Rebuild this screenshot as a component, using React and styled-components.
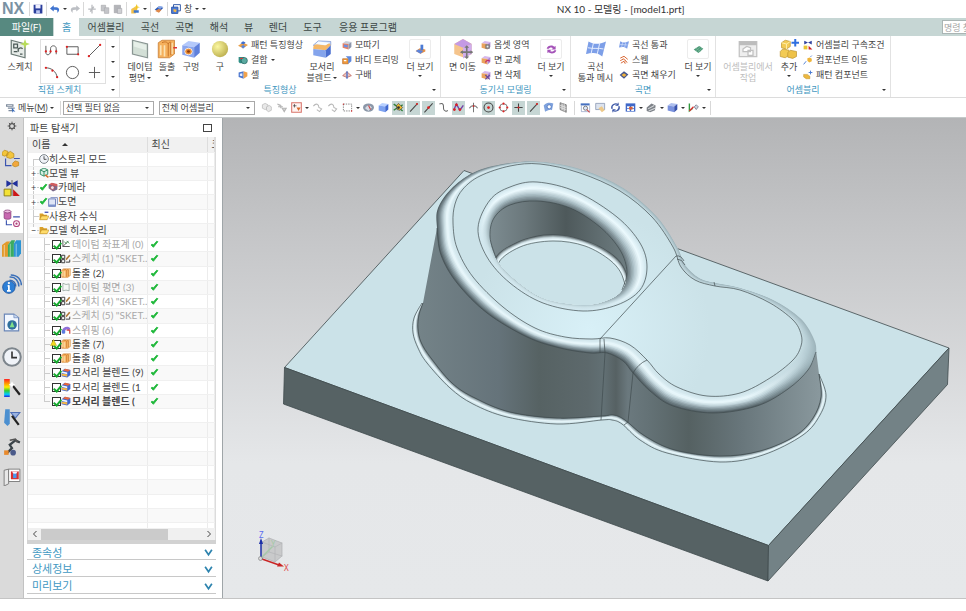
import React, { useState } from "react";
import styled, { createGlobalStyle } from "styled-components";

const GlobalStyle = createGlobalStyle`
  * {
    box-sizing: border-box;
  }
  body {
    margin: 0;
    background: #fff;
    color: #444;
    font-family: Lato, "Noto Sans CJK KR", sans-serif;
    font-size: 10px;
  }
  button, input, select {
    font-family: inherit;
    color: inherit;
    margin: 0;
  }
`;

/* ---------- icons, all on a 16 x 16 grid ---------- */

const Cube = ({ top = "#b8d0ff", left = "#7ea2f0", right = "#3f67cf" }) => (
  <>
    <path d="M1 5 6 1.500 15 3 10.500 6.500Z" fill={top} />
    <path d="M1 5 10.500 6.500V15L1 12.500Z" fill={left} />
    <path d="M10.500 6.500 15 3V11L10.500 15Z" fill={right} />
  </>
);

const GoldCubes = () => (
  <>
    <path d="M2 3 5 1 9 2V6L6 8 2 7Z" fill="#f3cb55" stroke="#c09a38" strokeWidth=".6" />
    <path d="M2 3 6 4 9 2M6 4V8" stroke="#fff0b0" fill="none" strokeWidth=".7" />
    <path d="M1 10 3 8 8 9V13L5 15 1 14Z" fill="#f3cb55" stroke="#c09a38" strokeWidth=".6" />
    <path d="M7 11 9 9 14 10V14L11 15.500 7 14.500Z" fill="#eec248" stroke="#c09a38" strokeWidth=".6" />
  </>
);

const Dot = ({ x, y, r = 1.2, c = "#d22" }) => <circle cx={x} cy={y} r={r} fill={c} />;

const icons = {
  save: (
    <>
      <path d="M1 1H15V15H2L1 14Z" fill="#2b3f9c" />
      <path d="M4 1H12V7H4Z" fill="#eef" />
      <path d="M5 10H11V15H5Z" fill="#b9c4ee" />
    </>
  ),
  undo: <path d="M0 7 6 2V5H10C16 5 16 12 11 14 13 10 12 9 6 9V12Z" fill="#3f74d0" />,
  redo: <path d="M16 7 10 2V5H6C0 5 0 12 5 14 3 10 4 9 10 9V12Z" fill="#bcbfc4" />,
  cut: <path d="M8 1V15M2 8H14M5 12 11 4" stroke="#b9bbbf" strokeWidth="2" fill="none" />,
  copy: (
    <g stroke="#a6a8ac" fill="#c4c5c9">
      <path d="M2 2H9V11H2Z" />
      <path d="M7 6H14V15H7Z" />
    </g>
  ),
  paste: (
    <g stroke="#a0a2a6" fill="#b4b5b9">
      <path d="M2 2H12V14H2Z" />
      <path d="M7 7H14V15H7Z" fill="#d0d1d4" />
    </g>
  ),
  star: (
    <>
      <path d="M2 8 7 5 12 7 9 15H2Z" fill="#f3c04a" />
      <path d="M11 0 12 4 16 5 12 6 11 10 9 6 6 5 9 4Z" fill="#f0c520" />
      <path d="M6 10H14V14H6Z" fill="#3c76cc" />
    </>
  ),
  layers: (
    <>
      <path d="M1 9 7 4 15 6 9 12Z" fill="#2e5bb5" />
      <path d="M2 11 7 8 12 9 8 14Z" fill="#e08a4a" />
      <path d="M5 6 9 3 14 4 10 8Z" fill="#84a6e8" />
    </>
  ),
  windows: (
    <>
      <path d="M4 1H15V11H4Z" fill="#fff" stroke="#2d55a8" strokeWidth="1.500" />
      <path d="M1 5H11V15H1Z" fill="#4c7cd8" stroke="#2d55a8" strokeWidth="1.500" />
      <path d="M4 8 9 9 8 13 4 12Z" fill="#f5b840" />
    </>
  ),
  sketch: (
    <>
      <path d="M1 1 12 4V15L1 12Z" fill="#e6ebe8" stroke="#6b7a76" />
      <path d="M3 4H6V7H3ZM7 10C5 8 9 6 10 8M3 10H6M8 12H10" fill="none" stroke="#4b5a57" />
      <path d="M12 0 13 3 16 4 13 5 12 8 11 5 8 4 11 3Z" fill="#b8dc5a" />
    </>
  ),
  profile: (
    <>
      <path d="M2 3V10C2 14 7 13 7 9V6C7 2 13 2 13 6V12" fill="none" stroke="#555" />
      <Dot x={2} y={9} /><Dot x={7} y={9} /><Dot x={13} y={9} />
    </>
  ),
  rect: (
    <>
      <path d="M2 4H14V12H2Z" fill="none" stroke="#555" />
      <Dot x={2} y={4} /><Dot x={14} y={12} />
    </>
  ),
  line: (
    <>
      <path d="M2 14 14 2" stroke="#555" />
      <Dot x={2} y={14} /><Dot x={14} y={2} />
    </>
  ),
  arc: (
    <>
      <path d="M2 3C8 3 13 7 14 13" fill="none" stroke="#555" />
      <Dot x={2} y={3} /><Dot x={9} y={6} /><Dot x={14} y={13} />
    </>
  ),
  circle: <circle cx="8" cy="8" r="6.500" fill="none" stroke="#555" />,
  plus: <path d="M8 2V14M2 8H14" stroke="#555" />,
  datum: (
    <>
      <path d="M2 1 14 4V15L2 12Z" fill="#d3dfd6" stroke="#8a9693" />
      <path d="M3 2 13 5V9L3 6Z" fill="#e6efe8" />
    </>
  ),
  extrude: (
    <>
      <path d="M1 3 4 1H15V12L11 15H1Z" fill="#f5b05c" stroke="#c47a30" strokeWidth=".6" />
      <path d="M3 5V13M6 5V14M13 2V12" stroke="#fbe2b4" strokeWidth="1.500" />
      <path d="M4 3C6 2 8 2 9 4V14M9 4C10 2 12 2 12 3V13" fill="none" stroke="#c8752a" />
    </>
  ),
  extrudeRed: (
    <>
      <path d="M1 3 4 1H14V12L10 15H1Z" fill="#f5b05c" stroke="#c47a30" strokeWidth=".6" />
      <path d="M3 5V13M6 5V14M12 3V12" stroke="#fbe2b4" strokeWidth="1.300" />
      <path d="M4 3C6 2 8 2 9 4V14M9 4C10 2 11 2 11 3V13" fill="none" stroke="#c8752a" strokeWidth=".8" />
      <path d="M13 7H16" stroke="#d33" strokeWidth="1.200" />
    </>
  ),
  hole: (
    <>
      <Cube top="#b4c9fb" left="#8ba6ee" right="#5f80dc" />
      <ellipse cx="6" cy="10" rx="3" ry="2.600" fill="#e98a2e" stroke="#fff" strokeWidth=".6" />
      <ellipse cx="6" cy="10" rx="1.200" ry="1" fill="#8c3c12" />
    </>
  ),
  sphere: <circle cx="8" cy="8" r="6.500" fill="url(#gold)" />,
  pattern: (
    <>
      <path d="M0 9 8 4 16 8 8 13Z" fill="#e9a04a" />
      <path d="M4 5 8 2 12 4 9 7Z" fill="#3f6ed0" />
      <path d="M5 10 8 8 12 10 8 14Z" fill="#5a85da" />
    </>
  ),
  unite: (
    <>
      <path d="M1 3H10V13H3L1 11Z" fill="#2e8f86" />
      <circle cx="10" cy="9" r="5" fill="#5aa9a0" stroke="#1c5c58" />
      <path d="M3 6 8 5" stroke="#e33" strokeWidth="1.500" />
    </>
  ),
  shell: (
    <>
      <path d="M1 4 9 2V14L1 11Z" fill="#4a76cf" />
      <path d="M9 2 15 4V10L9 14Z" fill="#f0a24c" />
      <path d="M3 6 7 5V10L3 9Z" fill="#e9eefc" />
    </>
  ),
  blend: (
    <>
      <path d="M1 5 5 1.500 15 2 15 5 10 7Z" fill="#cfe0ff" stroke="#6a86c8" strokeWidth=".5" />
      <path d="M1 7C1 3 5 4 10 5C14 3 14 3 15 5L11 9 1 8Z" fill="#f5b868" />
      <path d="M5 2 14 3 11 5 3 4Z" fill="#f7fbff" />
      <path d="M1 8 11 9V15L1 13Z" fill="#84a4ec" />
      <path d="M11 9 15 5V12L11 15Z" fill="#4a6fd0" />
    </>
  ),
  treeBlend: (
    <>
      <path d="M1 5 6 1 15 3V11L10 15 1 13Z" fill="#3f67cf" />
      <path d="M1 5 10 7V10L1 8Z" fill="#f0f4ff" />
      <path d="M3 4 7 1 15 3 11 6Z" fill="#e8673c" />
      <path d="M1 9 10 10V14L1 12Z" fill="#f3b64a" />
    </>
  ),
  chamfer: (
    <>
      <Cube top="#c9cfda" left="#e9805e" right="#8d97ad" />
      <path d="M3 7 9 8V12L3 11Z" fill="#6a90e6" />
    </>
  ),
  trim: (
    <>
      <path d="M1 6H10V14H1Z" fill="#f09a3c" stroke="#b5641d" />
      <path d="M6 2H15V10L10 14V6Z" fill="#5e88dc" />
      <path d="M3 9H7" stroke="#fff" strokeWidth="2" />
    </>
  ),
  draft: (
    <>
      <path d="M1 9 8 3 15 9 8 12Z" fill="#e7c3bf" stroke="#b3473c" />
      <path d="M8 2V14" stroke="#3d67c8" strokeWidth="2" />
    </>
  ),
  moreBody: (
    <>
      <path d="M1 10 7 6 15 8V11L8 14Z" fill="#e79147" />
      <path d="M8 1H12V9H8Z" fill="#4b7bd4" />
      <path d="M1 10 5 8 12 10 8 14Z" fill="#5c84dc" />
    </>
  ),
  moveFace: (
    <>
      <path d="M1 4 8 0 15 4V12L9 15 1 12Z" fill="#f5c48c" />
      <path d="M1 4 8 0 15 4 8 7Z" fill="#c49ae4" />
      <path d="M8 7 15 4V12L8 15.500Z" fill="#d0aeee" />
      <path d="M11 6V15M6.500 10.500H15.500" stroke="#777" strokeWidth="1.300" />
      <path d="M11 5 9 7H13ZM11 16 9 14H13ZM5.500 10.500 8 9V12ZM16 10.500 14 9V12Z" fill="#777" />
    </>
  ),
  offset: (
    <>
      <Cube top="#d7b7ec" left="#eba35c" right="#b08ad8" />
      <path d="M7 7H14V14H7Z" fill="#777" />
      <path d="M9 9H12V12H9Z" fill="#eee" />
    </>
  ),
  replace: (
    <>
      <Cube top="#d7b7ec" left="#eba35c" right="#b08ad8" />
      <path d="M7 12C9 8 12 8 14 10" stroke="#c02f6b" strokeWidth="2" fill="none" />
    </>
  ),
  remove: (
    <>
      <Cube top="#d7b7ec" left="#eba35c" right="#b08ad8" />
      <path d="M7 8 14 15M14 8 7 15" stroke="#6a4a9a" strokeWidth="2" />
    </>
  ),
  moreSync: (
    <g fill="#a452b8">
      <path d="M1 7C2 2 9 1 12 4L14 3V8H8L10 6C8 4 5 5 4 7Z" />
      <path d="M15 9C14 14 7 15 4 12L2 13V8.500H8L6 10C8 12 11 11 12 9Z" />
    </g>
  ),
  mesh: (
    <>
      <path d="M2 2C7 5 11 4 16 2L13 14C9 10 4 11 0 12Z" fill="#7d9fe8" />
      <path d="M1.500 7C6 8 10 7 14 8M6 3 4 12M11 3 9 12" stroke="#e5edff" fill="none" strokeWidth=".8" />
    </>
  ),
  swept: (
    <g fill="none" stroke="#d9622e" strokeWidth="1.500">
      <path d="M2 5 8 2 14 7M2 9 8 6 13 12M3 13 8 10 10 14" />
      <path d="M5 3 12 13" stroke="#eab79d" />
    </g>
  ),
  fillSurf: (
    <>
      <path d="M1 8 8 2 15 7 8 14Z" fill="#44568f" />
      <path d="M4 8 8 5 12 8 8 11Z" fill="#f0b23c" />
    </>
  ),
  moreSurf: (
    <>
      <path d="M1 8 9 3 15 7 8 13Z" fill="#4e9a78" />
      <path d="M4 10 11 4M7 12 13 6M4 6 11 11" stroke="#85c0a4" strokeWidth=".8" />
    </>
  ),
  context: (
    <>
      <path d="M1 2H15V14H1Z" fill="#eee" stroke="#c2c2c2" />
      <path d="M1 2H15V5H1Z" fill="#bdbdbd" />
      <path d="M4 8 7 6 10 7V10H4ZM8 9H12V13H8Z" fill="#fff" stroke="#c0c0c0" />
    </>
  ),
  add: (
    <>
      <GoldCubes />
      <path d="M13 0V6M10 3H16" stroke="#2f6fe0" strokeWidth="1.600" />
    </>
  ),
  constraint: (
    <>
      <path d="M2 1 8 4 14 1V7L8 4 2 7Z" fill="#2d3f9c" />
      <path d="M1 9H7V15H1Z" fill="#e9c432" />
      <path d="M9 9 15 15H9Z" fill="#cc2222" />
    </>
  ),
  moveComp: (
    <>
      <path d="M7 5 11 4 14 6V10L10 12 7 9Z" fill="#eeb43a" />
      <path d="M1 15 5 10M12 3 14 1" stroke="#4a7bd2" strokeWidth="1.500" />
    </>
  ),
  patComp: (
    <>
      <path d="M1 7H7L11 10V14H5L1 11Z" fill="#edb840" stroke="#b88a1c" strokeWidth=".7" />
      <path d="M12 1V7M9 4H15" stroke="#4a7bd2" strokeWidth="1.500" />
    </>
  ),
  menu: (
    <>
      <path d="M0 2H12V6H0ZM3 7H14V9H3ZM4 11H11V13H4Z" fill="#7d8a9c" />
      <path d="M2 4H10" stroke="#fff" />
      <path d="M9 7 15 14 11 13 10 16Z" fill="#3b6cb8" />
    </>
  ),
  ghost: (
    <g fill="#e8e8e8" stroke="#b5b5b5">
      <path d="M2 4 6 2 10 4V9L6 11 2 9Z" />
      <path d="M8 7 12 5 15 7V12L11 14 8 12Z" />
    </g>
  ),
  ghostArrow: <path d="M2 3 7 5V9M9 9H15L12 14ZM3 7H10" stroke="#b5b5b5" fill="#d5d5d5" strokeWidth="1.500" />,
  filter: (
    <>
      <path d="M1 1H15V15H1Z" fill="#fff4f2" stroke="#d8736a" strokeWidth="1.500" />
      <path d="M5 3V8M3 5.500H8" stroke="#333" />
      <path d="M8 8H14L11 13Z" fill="#d86a2c" />
    </>
  ),
  ghostHand: <path d="M2 6C6 1 10 3 10 8L14 10 11 14 7 11" stroke="#b8b8b8" fill="none" strokeWidth="1.500" />,
  marquee: (
    <>
      <path d="M2 3H14V13H2Z" fill="none" stroke="#555" strokeDasharray="2 1.500" />
      <Dot x={2} y={3} r={1} /><Dot x={14} y={13} r={1} />
    </>
  ),
  clip: (
    <>
      <ellipse cx="8" cy="8" rx="8" ry="6" fill="#8b97a8" />
      <path d="M3 9C6 4 10 4 13 8L8 13Z" fill="#d6dbe4" />
      <path d="M8 5 11 11" stroke="#c44" strokeWidth="1.500" />
    </>
  ),
  box: <Cube />,
  snap: (
    <>
      <path d="M1 3 7 7M1 12 7 8M9 8 14 4M9 9 14 13" stroke="#2f7f3a" strokeWidth="2" />
      <path d="M5 5 8 2 11 5 14 8 10 12 6 11Z" fill="#e9b830" stroke="#444" />
      <Dot x={8} y={8} r={2} c="#333" />
    </>
  ),
  snapLine: (
    <>
      <path d="M3 14 14 2" stroke="#444" strokeWidth="1.500" />
      <Dot x={13} y={3} r={1.500} />
    </>
  ),
  snapMid: (
    <>
      <path d="M2 15 14 2" stroke="#444" strokeWidth="1.500" />
      <Dot x={8} y={8} r={2} />
    </>
  ),
  curve: <path d="M2 3C9 0 8 7 8 9 8 14 13 14 14 12" fill="none" stroke="#666" strokeWidth="1.500" />,
  poly: (
    <>
      <path d="M1 12 5 3 10 12 15 5" fill="none" stroke="#7242a8" strokeWidth="2" />
      <Dot x={2} y={11} r={2} /><Dot x={10} y={11} r={2} /><Dot x={5} y={4} r={2} />
    </>
  ),
  cross: (
    <>
      <path d="M8 1V15M2 9C5 4 11 4 14 9" fill="none" stroke="#777" strokeWidth="1.500" />
      <Dot x={8} y={6} />
    </>
  ),
  center: (
    <>
      <circle cx="8" cy="8" r="6.500" fill="none" stroke="#444" strokeWidth="1.500" />
      <Dot x={8} y={8} r={2} />
    </>
  ),
  quad: (
    <>
      <circle cx="8" cy="8" r="5.500" fill="none" stroke="#666" strokeWidth="1.200" />
      <Dot x={8} y={2.500} r={1.600} /><Dot x={8} y={13.500} r={1.600} /><Dot x={2.500} y={8} r={1.600} /><Dot x={13.500} y={8} r={1.600} />
    </>
  ),
  plusDark: (
    <>
      <path d="M8 2V14M2 8H14" stroke="#444" strokeWidth="1.500" />
      <Dot x={8} y={8} r={1.500} />
    </>
  ),
  face: (
    <>
      <path d="M1 5C6 0 11 1 15 2L13 12C9 10 7 13 3 14Z" fill="#7fa2dd" />
      <circle cx="9" cy="7" r="3" fill="#fff" stroke="#3d67b8" />
    </>
  ),
  grid: (
    <>
      <path d="M3 1 12 4V15L3 11Z" fill="#aaa" stroke="#666" />
      <path d="M6 2V12M9 3V14M3 5 12 8M3 8 12 11" stroke="#eee" />
    </>
  ),
  fit: (
    <>
      <path d="M1 2H14V5H1Z" fill="#4670c0" />
      <path d="M2 5V14H14V5" fill="none" stroke="#8a9cc0" />
      <circle cx="8" cy="9" r="3" fill="#dfe9fb" stroke="#555" />
      <path d="M10 11 14 15" stroke="#c44" strokeWidth="1.500" />
    </>
  ),
  note: (
    <>
      <path d="M1 2H14V11H1Z" fill="#dce3ee" stroke="#7c8aa8" />
      <path d="M5 9 10 6 14 12 10 15Z" fill="#edc98a" />
    </>
  ),
  rotate: (
    <g fill="none" stroke="#3f5aa8" strokeWidth="2">
      <path d="M3 10C1 4 8 1 12 4M13 6C15 12 8 15 4 12" />
      <path d="M12 1V5H8M4 15V11H8" strokeWidth="1.200" />
    </g>
  ),
  layout: (
    <>
      <path d="M1 2H15V14H1Z" fill="#3f68c8" />
      <path d="M3 6H7V9H3ZM9 6H13V9H9ZM3 10H7V13H3ZM9 10H13V13H9Z" fill="#fff" />
      <path d="M6 7H11V11H6Z" fill="#d9603a" />
    </>
  ),
  shade: (
    <>
      <path d="M1 8 8 2 14 5 13 12 6 15 1 13Z" fill="#7d8288" />
      <path d="M3 10 12 5M4 13 13 9" stroke="#d5d8db" strokeWidth="1.500" />
    </>
  ),
  cubeBlue: <Cube top="#aebfee" left="#7a92de" right="#3752ac" />,
  csys: (
    <>
      <path d="M2 2V13L7 9" stroke="#2e9a3c" strokeWidth="2" fill="none" />
      <path d="M2 13 8 7" stroke="#d33" strokeWidth="2" />
      <path d="M9 7 12 4 15 7 12 11Z" fill="#ccd3df" stroke="#667" />
    </>
  ),
  gear: (
    <>
      <circle cx="8" cy="8" r="4" fill="none" stroke="#555" strokeWidth="2" />
      <path d="M8 1V4M8 12V15M1 8H4M12 8H15M3 3 5 5M11 11 13 13M13 3 11 5M3 13 5 11" stroke="#555" strokeWidth="1.500" />
    </>
  ),
  asmNav: (
    <>
      <path d="M0 3 2 1 5 2V5L2 6 0 5ZM4 4 7 2 10 4V7L7 8 4 7Z" fill="#f3c53c" stroke="#b88a1c" strokeWidth=".6" />
      <path d="M3 8V14H8M10 8H15" stroke="#3c55b0" fill="none" />
      <path d="M9 12 11 10 14 11V14L11 15 9 14Z" fill="#f3a73c" stroke="#b88a1c" strokeWidth=".6" />
    </>
  ),
  consNav: (
    <>
      <path d="M3 1 8 4 13 1V7L8 4 3 7Z" fill="#20309c" />
      <path d="M8 1V15" stroke="#555" strokeWidth=".8" />
      <path d="M1 9H7V15H1Z" fill="#f4e235" stroke="#8a7a10" strokeWidth=".8" />
      <path d="M9 9 15 15H9Z" fill="#cc1818" />
    </>
  ),
  partNav: (
    <>
      <path d="M1 2V8C1 9.500 7 9.500 7 8V2" fill="#c868b0" stroke="#7c2f6c" strokeWidth=".6" />
      <ellipse cx="4" cy="2.200" rx="3" ry="1.300" fill="#efbfe2" stroke="#7c2f6c" strokeWidth=".6" />
      <path d="M3 10V14H8M9 7H15" stroke="#3c55b0" fill="none" />
      <circle cx="12" cy="13" r="2.600" fill="#fff" stroke="#b0407c" strokeWidth=".9" />
      <Dot x={12} y={13} r={1} c="#b0407c" />
    </>
  ),
  books: (
    <>
      <path d="M0 5 4 2H7L5 5V15H0Z" fill="#e39a2a" />
      <path d="M5 5 8 1H11L10 4V15H5Z" fill="#3bac60" />
      <path d="M10 4 12 1H16V12L14 15H10Z" fill="#2b94d4" />
      <path d="M2 5V15M7 4V15M12 4V15" stroke="#fff" strokeOpacity=".4" />
    </>
  ),
  info: (
    <>
      <path d="M6 5C9 5 11 7 11 10M6 2.500C11 2 13.500 6 13.500 10M7 .700C13 .700 15.500 5 15.500 9" fill="none" stroke="#3a6fb8" strokeWidth="1.200" />
      <circle cx="5.500" cy="10.500" r="5" fill="#2d7fd6" stroke="#1b4d96" strokeWidth=".6" />
      <path d="M5.500 9V13.500M4.500 9.500H5.500M4 13.500H7" stroke="#fff" strokeWidth="1.400" />
      <Dot x={5.500} y={7.200} r={.9} c="#fff" />
    </>
  ),
  web: (
    <>
      <path d="M2 1H10L14 4V15H2Z" fill="#f2f7ff" stroke="#6a86b8" />
      <path d="M10 1V4H14" fill="#c9d9f2" stroke="#6a86b8" strokeWidth=".6" />
      <circle cx="8.500" cy="10" r="4" fill="#2f6f9c" />
      <path d="M6.500 12 8.500 7 10.500 12Z" fill="#7fe08a" />
    </>
  ),
  clock: (
    <>
      <circle cx="8" cy="8" r="7" fill="#f0f3f8" stroke="#7d858c" strokeWidth="1.600" />
      <path d="M8 3.500V8.500H12" stroke="#333" strokeWidth="1.300" fill="none" />
    </>
  ),
  rainbow: (
    <>
      <path d="M1 0H6V16H1Z" fill="url(#spectrum)" />
      <path d="M8 5 15 14" stroke="#222" strokeWidth="2" />
      <path d="M8 2 9 4 11 5 9 6 8 8 7 6 5 5 7 4Z" fill="#fff" />
    </>
  ),
  wand: (
    <>
      <path d="M2 1H6V14L4 16 1 13Z" fill="#4b8fd0" />
      <path d="M7 4H15L11 9Z" fill="#9bb3e0" stroke="#5070b8" />
      <path d="M8 7 14 15" stroke="#222" strokeWidth="2" />
    </>
  ),
  robot: (
    <>
      <path d="M4 13 8 9 6 6 11 2 15 4" fill="none" stroke="#3b444a" strokeWidth="2" />
      <path d="M6 2 11 1 13 4" fill="none" stroke="#555" strokeWidth="1.500" />
      <path d="M1 11H5V15H1Z" fill="#e88a2c" />
      <circle cx="9" cy="13" r="2.500" fill="#4a5a8a" />
    </>
  ),
  door: (
    <>
      <path d="M1 2 5 1V14L1 16Z" fill="#e8e8e8" stroke="#777" strokeWidth=".8" />
      <path d="M5 1H15V12H5Z" fill="#fff" stroke="#777" strokeWidth=".8" />
      <path d="M7 3H14V10H7Z" fill="#d93030" />
      <path d="M8 3 10.500 7 13 3Z" fill="#f4f4ff" />
      <path d="M9 5H12V9H9Z" fill="#4a9af0" />
    </>
  ),
  views: (
    <>
      <path d="M2 3 8 0 14 3V10L8 13 2 10Z" fill="#d8eee2" stroke="#2e8a62" strokeWidth="1.500" />
      <path d="M2 3 8 6 14 3M8 6V13" stroke="#2e8a62" fill="none" strokeWidth="1.500" />
      <path d="M10 11 15 15" stroke="#d66a2c" strokeWidth="2.500" />
    </>
  ),
  camera: (
    <>
      <path d="M1 4 9 2 15 6V12L8 15 1 10Z" fill="#7a6a8a" />
      <path d="M1 4 6 1 15 3V7Z" fill="#d25c5c" />
      <circle cx="7" cy="9" r="3" fill="#e8e2ee" stroke="#b33" />
    </>
  ),
  drawing: (
    <>
      <path d="M4 1H15V12" fill="none" stroke="#5a6eb0" strokeWidth="1.200" />
      <path d="M1 3H12V15H1Z" fill="#dfe5f6" stroke="#5a6eb0" strokeWidth="1.300" />
      <path d="M1 12H12V15H1Z" fill="#7c92cc" />
    </>
  ),
  folder: (
    <>
      <path d="M1 3H6L8 5H13V14H1Z" fill="#d9a02a" />
      <path d="M4 8H16L13 14H1Z" fill="#ffdc6a" stroke="#a87818" strokeWidth=".7" />
    </>
  ),
  folderTag: (
    <>
      <path d="M1 4H6L8 6H13V14H1Z" fill="#d9a02a" />
      <path d="M4 8H16L13 14H1Z" fill="#ffdc6a" stroke="#a87818" strokeWidth=".7" />
      <path d="M9 2H15" stroke="#3a4ab0" strokeWidth="2" />
    </>
  ),
  treeCsys: (
    <>
      <path d="M3 1V12H14M3 12 12 3" stroke="#555" fill="none" strokeWidth="1.500" />
      <path d="M5 4 9 8M9 3 13 7" stroke="#3c9c50" strokeWidth="1.500" />
    </>
  ),
  treeSketch: (
    <>
      <path d="M1 2H6V7H1ZM1 9H6V14H1ZM8 13H14V9" stroke="#333" fill="none" strokeWidth="1.500" />
      <path d="M8 9 14 2" stroke="#b07a3a" strokeWidth="2.500" />
    </>
  ),
  treeDatum: <path d="M3 2 8 4 13 3V14L8 13 3 14Z" fill="#f5f8f6" stroke="#7d9088" />,
  treeSwept: (
    <>
      <path d="M1 10C2 3 12 0 15 6L12 9C9 5 6 8 6 12Z" fill="#8f70d8" />
      <circle cx="4" cy="11" r="3" fill="#5a7be0" />
      <path d="M9 8H14V14" stroke="#d34a4a" strokeWidth="2" fill="none" />
    </>
  ),
  tick: <path d="M2 9 6 13 14 3 12 2 6 9 4 7Z" fill="#1fb83a" stroke="#1fb83a" strokeWidth="1.500" />,
  warn: <path d="M1 15 8 1 15 15Z" fill="#f0d820" stroke="#a89a18" />,
};

const Svg = styled.svg`
  display: block;
  flex: none;
  width: ${(p) => p.$size}px;
  height: ${(p) => p.$size}px;
`;

const Icon = ({ name, size = 10 }) => (
  <Svg viewBox="0 0 16 16" $size={size} aria-hidden="true">
    {icons[name]}
  </Svg>
);

/* ---------- frame ---------- */

const Page = styled.div`
  display: flex;
  flex-direction: column;
  min-height: 100vh;
  overflow: hidden;
`;

const Caret = styled.i`
  flex: none;
  width: 4px;
  border: 2px solid transparent;
  border-top: 2px solid #333;
  border-bottom: 0;
`;

const PlainButton = styled.button`
  display: flex;
  align-items: center;
  justify-content: center;
  padding: 0;
  border: 0;
  background: none;
`;

const TitleBar = styled.header`
  display: grid;
  grid-template-columns: 2fr auto 1fr;
  align-items: center;
  height: 18px;
  padding: 0 4px 0 2px;
`;

const QuickAccess = styled.div`
  display: flex;
  align-items: center;
  gap: 3px;
`;

const Logo = styled.strong`
  width: 24px;
  font: bold 16px/18px "Liberation Sans", sans-serif;
  color: #7a92a3;
`;

const QuickButton = styled(PlainButton)`
  gap: 3px;
  font-size: 9px;
  line-height: 16px;
`;

const Divider = styled.span`
  flex: none;
  width: 1px;
  height: 14px;
  background: #d8d8d8;
`;

const WindowTitle = styled.h1`
  margin: 0;
  font-size: 10px;
  line-height: 18px;
  font-weight: 400;
  color: #333;
`;

const TabBar = styled.nav`
  display: flex;
  align-items: stretch;
  height: 18px;
  background: #c6d6d4;
`;

const Tab = styled(PlainButton)`
  min-width: ${(p) => p.$w}px;
  font-size: 10px;
  line-height: 18px;
  background: ${(p) => (p.$active ? "#fff" : "none")};
  color: ${(p) => (p.$active ? "#3f97c0" : "#3c4645")};
`;

const FileTab = styled(Tab)`
  background: #578980;
  color: #fff;
  margin-right: 1px;
`;

const Search = styled.input`
  width: 24px;
  height: 14px;
  margin: 2px 0 0 auto;
  padding: 0 0 0 1px;
  border: 1px solid #aab5b4;
  border-right: 0;
  border-radius: 0;
  font-size: 9px;
  background: #fff;
  &::placeholder {
    color: #a5a5a5;
  }
`;

const Ribbon = styled.div`
  display: flex;
  height: 62px;
  border-bottom: 1px solid #dcdcdc;
`;

const Group = styled.section`
  display: flex;
  flex-direction: column;
  flex: none;
  padding-top: 3px;
  border-right: 1px solid #e2e2e2;
`;

const GroupBody = styled.div`
  display: flex;
  height: 45px;
  padding: 0 ${(p) => p.$pad}px;
`;

const GroupLabel = styled.div`
  display: flex;
  align-items: center;
  padding: 0 4px 0 8px;
  font-size: 9px;
  line-height: 12px;
  color: #3f97c0;
  span {
    flex: 1;
    text-align: center;
  }
`;

const BigButton = styled(PlainButton)`
  flex: none;
  flex-direction: column;
  justify-content: flex-start;
  width: ${(p) => p.$w}px;
  font-size: 9px;
  line-height: 11px;
  white-space: nowrap;
  color: ${(p) => (p.disabled ? "#bdbdbd" : "#444")};
  svg {
    margin-bottom: 2px;
  }
`;

const CaretLine = styled.span`
  display: flex;
  align-items: center;
  gap: 2px;
  min-height: 8px;
`;

const MoreFrame = styled.span`
  display: flex;
  align-items: center;
  justify-content: center;
  width: 22px;
  height: 20px;
  margin-bottom: 2px;
  border: 1px solid #ececec;
  border-radius: 2px;
  svg {
    margin: 0;
  }
`;

const SmallColumn = styled.div`
  flex: none;
  width: ${(p) => p.$w}px;
  padding: 0 0 0 1px;
`;

const SmallButton = styled(PlainButton)`
  gap: 3px;
  height: 15px;
  margin-top: ${(p) => (p.$first ? "-2px" : "0")};
  font-size: 9px;
  line-height: 11px;
  white-space: nowrap;
`;

const Gallery = styled.div`
  display: grid;
  grid-template-columns: repeat(3, 1fr);
  width: 66px;
  padding: 0;
  border: 1px solid #e0e0e0;
`;

const GalleryScroll = styled.div`
  display: flex;
  flex-direction: column;
  justify-content: space-around;
  align-items: center;
  width: 13px;
`;

const Big = ({ icon, lines, w, caret, disabled }) => (
  <BigButton $w={w} disabled={disabled}>
    <Icon name={icon} size={20} />
    {lines.map((line, i) => (
      <CaretLine key={line}>
        {line}
        {caret === "inline" && i === lines.length - 1 && <Caret />}
      </CaretLine>
    ))}
    {caret === "below" && <CaretLine><Caret /></CaretLine>}
  </BigButton>
);

const More = ({ icon }) => (
  <BigButton $w={30}>
    <MoreFrame><Icon name={icon} size={11} /></MoreFrame>
    <CaretLine>더 보기</CaretLine>
    <CaretLine><Caret /></CaretLine>
  </BigButton>
);

const Small = ({ w, items }) => (
  <SmallColumn $w={w}>
    {items.map(([icon, text, caret], i) => (
      <SmallButton key={text} $first={i === 0}>
        <Icon name={icon} />
        {text}
        {caret && <Caret />}
      </SmallButton>
    ))}
  </SmallColumn>
);

const RibbonGroup = ({ label, pad, children }) => (
  <Group>
    <GroupBody $pad={pad}>{children}</GroupBody>
    <GroupLabel>
      <span>{label}</span>
      <Caret />
    </GroupLabel>
  </Group>
);

/* ---------- selection bar ---------- */

const SelectionBar = styled.div`
  display: flex;
  align-items: center;
  gap: 2px;
  height: 20px;
  padding-left: 6px;
  border-bottom: 1px solid #c4c9c9;
`;

const MenuButton = styled(PlainButton)`
  gap: 2px;
  margin-right: 4px;
  font-size: 9px;
  line-height: 14px;
  white-space: nowrap;
`;

const Picker = styled.label`
  display: flex;
  align-items: center;
  flex: none;
  width: ${(p) => p.$w}px;
  height: 14px;
  margin-right: 3px;
  padding-right: 4px;
  border: 1px solid #a9a9a9;
  select {
    appearance: none;
    flex: 1;
    min-width: 0;
    height: 12px;
    padding: 0 0 0 2px;
    border: 0;
    background: none;
    font-size: 9px;
    line-height: 12px;
  }
`;

const ToolButton = styled(PlainButton)`
  flex: none;
  width: 13px;
  height: 14px;
  background: ${(p) => (p.$on ? "#c6d6d4" : "none")};
`;

const tools = [
  "ghost", "ghostArrow", "filter", "^", "ghostHand", "ghostHand", "marquee", "^", "clip", "box",
  "snap*", "snapLine*", "snapMid*", "curve", "poly*", "cross", "center*", "quad", "plusDark*", "snapLine*",
  "face", "grid", "|", "fit", "note", "rotate", "layout", "^", "shade", "^", "cubeBlue", "^", "csys", "^", "|",
];

const ToolSpacer = styled(Divider)`
  margin: 0 2px;
`;

/* ---------- left side ---------- */

const Main = styled.main`
  display: flex;
  flex: 1;
  min-height: 0;
`;

const SideStrip = styled.nav`
  flex: none;
  width: 24px;
  background: #dadada;
  border-right: 1px solid #c2c2c2;
`;

const SideButton = styled(PlainButton)`
  width: 100%;
  height: ${(p) => p.$h}px;
  background: ${(p) => (p.$active ? "#fff" : "none")};
`;

const sideItems = [
  ["gear", 16, 10], ["", 9, 0], ["asmNav", 30, 19], ["consNav", 30, 18], ["partNav", 30, 18], ["books", 30, 19],
  ["info", 42, 20], ["web", 34, 19], ["clock", 35, 20], ["rainbow", 28, 18], ["wand", 30, 18],
  ["robot", 30, 18], ["door", 30, 18],
];

const Panel = styled.aside`
  display: flex;
  flex-direction: column;
  flex: none;
  width: 199px;
  padding: 0 6px 4px 3px;
  border-right: 1px solid #9fa5a8;
  background: #fff;
`;

const PanelTitle = styled.div`
  display: flex;
  align-items: center;
  justify-content: space-between;
  height: 19px;
  padding: 0 4px 0 3px;
`;

const MaxBox = styled(PlainButton)`
  width: 9px;
  height: 8px;
  border: 1px solid #444;
`;

const TreeBox = styled.div`
  flex: 1 1 0;
  min-height: 0;
  overflow: hidden;
  border: 1px solid #dcdcdc;
  border-width: 0 1px;
`;

const Tree = styled.table`
  width: 100%;
  table-layout: fixed;
  border-collapse: collapse;
  th, td {
    height: 14px;
    padding: 0;
    border-right: 1px solid #ececec;
    border-bottom: 1px solid #f0f0f0;
    overflow: hidden;
    white-space: nowrap;
    line-height: 13px;
    text-align: left;
    font-weight: 400;
  }
  th {
    height: 15px;
    padding-left: 4px;
    background: #f1f1f1;
    border-right-color: #ddd;
  }
  th:first-child {
    width: 119px;
  }
  th:nth-child(2) {
    width: 60px;
  }
  tbody tr:nth-child(even) td {
    background: #f9f9f9;
  }
  tbody tr:nth-child(4n) td {
    height: 15px;
  }
  td:nth-child(2) {
    padding-left: 2px;
  }
`;

const SortMark = styled.i`
  display: inline-block;
  margin: 0 0 2px 12px;
  border: 3px solid transparent;
  border-top: 0;
  border-bottom: 3px solid #333;
`;

const Cell = styled.div`
  display: flex;
  align-items: center;
  position: relative;
  height: 13px;
  padding-left: ${(p) => (p.$child ? 11 : 0)}px;
  color: ${(p) => (p.$dim ? "#a9a9a9" : "#444")};
  font-weight: ${(p) => (p.$bold ? 700 : 400)};
  label {
    padding-left: 1px;
  }
`;

const Branch = styled.span`
  flex: none;
  width: 11px;
  height: 14px;
  background:
    linear-gradient(#ccc, #ccc) 5px ${(p) => (p.$first ? "7px" : "0")} / 1px ${(p) => (p.$last ? "7px" : "100%")} no-repeat,
    linear-gradient(#ccc, #ccc) 5px 7px / 6px 1px no-repeat;
  text-align: center;
`;

const Toggle = styled(PlainButton)`
  width: 7px;
  height: 7px;
  margin: 4px 2px 0;
  background: #fff;
  font-size: 9px;
  line-height: 7px;
`;

const WarnMark = styled.span`
  position: absolute;
  left: 22px;
  top: 1px;
`;

const Check = styled.input`
  appearance: none;
  flex: none;
  width: 9px;
  height: 9px;
  margin: 0 0 0 2px;
  border: 1px solid #333;
  background: #fff;
  &:checked::after {
    content: "";
    display: block;
    width: 3px;
    height: 6px;
    margin: 0 0 0 2px;
    border: solid #16a82e;
    border-width: 0 2px 2px 0;
    transform: rotate(40deg);
  }
`;

const rows = [
  { text: "히스토리 모드", icon: "clock" },
  { text: "모델 뷰", icon: "views", toggle: "+" },
  { text: "카메라", icon: "camera", toggle: "+", tick: true },
  { text: "도면", icon: "drawing", toggle: "+", tick: true },
  { text: "사용자 수식", icon: "folderTag" },
  { text: "모델 히스토리", icon: "folder", toggle: "−" },
  { text: "데이텀 좌표계 (0)", icon: "treeCsys", child: true, dim: true },
  { text: '스케치 (1) "SKET...', icon: "treeSketch", child: true, dim: true },
  { text: "돌출 (2)", icon: "extrude", child: true },
  { text: "데이텀 평면 (3)", icon: "treeDatum", child: true, dim: true },
  { text: '스케치 (4) "SKET...', icon: "treeSketch", child: true, dim: true },
  { text: '스케치 (5) "SKET...', icon: "treeSketch", child: true, dim: true },
  { text: "스위핑 (6)", icon: "treeSwept", child: true, dim: true },
  { text: "돌출 (7)", icon: "extrude", child: true, warn: true },
  { text: "돌출 (8)", icon: "extrude", child: true },
  { text: "모서리 블렌드 (9)", icon: "treeBlend", child: true },
  { text: "모서리 블렌드 (1", icon: "treeBlend", child: true },
  { text: "모서리 블렌드 (", icon: "treeBlend", child: true, bold: true },
];
const emptyRows = Array.from({ length: 10 }, (_, i) => i);

const ScrollRow = styled.div`
  display: flex;
  align-items: center;
  height: 12px;
  background: #f0f0f0;
  border: 1px solid #dcdcdc;
  border-width: 0 1px;
`;

const ScrollThumb = styled.span`
  flex: 0 0 68%;
  height: 11px;
  background: #cbcbcb;
`;

const ScrollEnd = styled(PlainButton)`
  width: 13px;
  margin-left: ${(p) => (p.$end ? "auto" : "0")};
`;

const Splitter = styled.div`
  height: 4px;
  background: #d2d2d2;
`;

const Section = styled(PlainButton)`
  justify-content: space-between;
  height: ${(p) => (p.$first ? 16 : 17)}px;
  padding: 2px 3px 0 5px;
  border-bottom: 1px solid #c8c8c8;
  font-size: 11px;
  line-height: 14px;
  color: #4198c2;
`;

const Chevron = ({ d, size, color, width }) => (
  <Svg viewBox="0 0 16 16" $size={size} aria-hidden="true">
    <path d={d} fill="none" stroke={color} strokeWidth={width} />
  </Svg>
);

const Viewport = styled.div`
  flex: 1;
  min-width: 0;
  background: linear-gradient(#b3b4b6, #c6c7c9 26%, #e5e7e9 72%, #e6e8ea);
`;

const Scene = styled.svg`
  display: block;
  width: 100%;
  height: auto;
  text {
    font: 8px "Noto Sans", sans-serif;
  }
`;

const StatusBar = styled.footer`
  height: 13px;
  border-top: 1px solid #c4c4c4;
  background: #fff;
`;

/* ---------- the solid ---------- */

// pairs of [outer x, outer y, inner x, inner y]; in-between curves give the rounded edges
const rim = [
  [437, 228, 453, 223], [438, 208, 455, 204], [453, 187, 463, 189], [477, 171, 480, 176], [510, 163, 510, 166],
  [543, 162, 540, 164], [583, 170, 580, 173], [623, 188, 620, 191], [657, 217, 652, 217], [677, 247, 673, 247],
  [685, 265, 681, 267], [699, 278, 695, 280], [715, 283, 715, 286], [740, 288, 740, 290], [773, 300, 770, 303],
  [800, 318, 793, 320], [813, 337, 801, 334], [816, 352, 801, 346], [808, 370, 793, 360], [788, 389, 770, 378],
  [757, 406, 740, 393], [713, 413, 707, 396], [673, 406, 677, 387], [650, 391, 659, 374], [633, 373, 647, 360],
  [623, 361, 630, 345], [607, 353, 610, 338], [590, 353, 592, 339], [560, 348, 565, 337], [527, 337, 535, 328],
  [487, 313, 503, 307], [457, 283, 473, 277], [441, 255, 457, 248],
];
const hole = [
  [478, 228, 490, 237], [490, 200, 494, 218], [510, 187, 510, 205], [537, 182, 537, 201], [577, 192, 570, 208],
  [617, 217, 600, 227], [640, 243, 620, 250], [647, 267, 627, 272], [640, 290, 622, 290], [617, 305, 608, 300],
  [583, 311, 583, 305], [543, 303, 543, 298], [510, 283, 512, 277], [487, 257, 496, 258],
];
const foot = [
  [422, 303, 423, 303], [414, 318, 419, 315], [413, 333, 418, 328], [418, 348, 421, 342], [427, 363, 431, 358],
  [450, 388, 452, 383], [473, 404, 475, 398], [507, 417, 510, 412], [557, 424, 557, 418], [602, 420, 601, 416],
  [612, 420, 614, 415], [622, 424, 625, 420], [640, 440, 645, 436], [667, 453, 675, 450], [720, 462, 720, 456],
  [763, 455, 760, 451], [803, 435, 795, 436], [820, 415, 813, 418], [826, 395, 821, 397], [819, 374, 819, 374],
];
const floor = [
  [494, 262, 498, 265], [517, 242, 520, 247], [553, 234, 553, 241], [590, 242, 585, 246], [617, 258, 611, 261],
  [628, 278, 623, 278], [626, 300, 621, 296], [580, 330, 580, 320], [510, 300, 512, 290],
];

const mix = (pairs, t) => pairs.map(([a, b, c, d]) => [a + (c - a) * t, b + (d - b) * t]);

const smooth = (pts, closed) => {
  const n = pts.length;
  const at = (i) => (closed ? pts[(i + n) % n] : pts[Math.max(0, Math.min(n - 1, i))]);
  let d = `M${pts[0].join(" ")}`;
  for (let i = 0; i < (closed ? n : n - 1); i++) {
    const [p0, p1, p2, p3] = [at(i - 1), at(i), at(i + 1), at(i + 2)];
    d += `C${p1[0] + (p2[0] - p0[0]) / 6} ${p1[1] + (p2[1] - p0[1]) / 6} ${p2[0] - (p3[0] - p1[0]) / 6} ${p2[1] - (p3[1] - p1[1]) / 6} ${p2[0]} ${p2[1]}`;
  }
  return closed ? d + "Z" : d;
};

const ramp = (stops, t) => {
  const i = Math.max(1, stops.findIndex(([s]) => s >= t));
  const [a, ca] = stops[i - 1];
  const [b, cb] = stops[i];
  const k = (t - a) / (b - a);
  return `rgb(${ca.map((v, j) => Math.round(v + (cb[j] - v) * k)).join(",")})`;
};

const rimFront = [[0, [84, 97, 102]], [0.2, [132, 150, 157]], [0.42, [198, 217, 224]], [0.6, [236, 250, 254]], [0.8, [212, 232, 238]], [1, [205, 228, 234]]];
const rimBack = [[0, [158, 180, 187]], [0.5, [180, 203, 210]], [1, [200, 222, 228]]];
const holeBack = [[0, [207, 229, 236]], [0.3, [236, 250, 254]], [0.6, [178, 198, 205]], [0.85, [122, 138, 144]], [1, [96, 109, 114]]];
const holeFront = [[0, [212, 234, 241]], [0.6, [205, 226, 232]], [1, [176, 198, 205]]];
const footRamp = [[0, [203, 225, 231]], [0.4, [236, 250, 254]], [0.65, [180, 198, 204]], [1, [70, 82, 86]]];
const floorRamp = [[0, [75, 86, 89]], [0.4, [200, 216, 221]], [0.7, [236, 250, 254]], [1, [203, 226, 232]]];
const steps = Array.from({ length: 15 }, (_, i) => i / 14);

const Bevel = ({ id, pairs, from, to, axis }) =>
  steps.map((t) => (
    <g key={t}>
      <linearGradient id={`${id}${Math.round(t * 100)}`} gradientUnits="userSpaceOnUse" {...axis}>
        <stop offset="0" stopColor={ramp(from, t)} />
        <stop offset="1" stopColor={ramp(to, t)} />
      </linearGradient>
      <path d={smooth(mix(pairs, t), true)} fill={`url(#${id}${Math.round(t * 100)})`} />
    </g>
  ));

const stops = (list) => list.map(([o, c]) => <stop key={o} offset={o} stopColor={c} />);

const Model = () => (
  <Scene viewBox="223 118 743 480" role="img" aria-label="model1.prt">
    <defs>
      <linearGradient id="wall" gradientUnits="userSpaceOnUse" x1="418" y1="0" x2="822" y2="0">
        {stops([[0, "#748388"], [0.2, "#65737a"], [0.3, "#566263"], [0.42, "#5d696c"], [0.46, "#627074"], [0.49, "#566163"],
          [0.52, "#6b797e"], [0.57, "#647276"], [0.67, "#556162"], [0.8, "#68767b"], [1, "#8a999e"]])}
      </linearGradient>
      <linearGradient id="bore" gradientUnits="userSpaceOnUse" x1="490" y1="0" x2="628" y2="0">
        {stops([[0, "#7d8c91"], [0.25, "#6b787c"], [0.55, "#4e595b"], [1, "#6f7e82"]])}
      </linearGradient>
      <radialGradient id="face" gradientUnits="userSpaceOnUse" cx="590" cy="330" r="120">
        <stop offset="0" stopColor="#d8f0f7" />
        <stop offset="1" stopColor="#cbe2e8" />
      </radialGradient>
      <clipPath id="boreClip"><path d={smooth(mix(hole, 1), true)} /></clipPath>
    </defs>
    <g stroke="#3f4a4c" strokeWidth=".8" strokeLinejoin="round">
      <path d="M284.500 367.500 464 170.500 949 348 768.500 545.500Z" fill="#cbe2e8" />
      <path d="M284.500 367.500 768.500 545.500 768 581 283.500 404Z" fill="#566264" />
      <path d="M768.500 545.500 949 348 947.500 384.500 768 581Z" fill="#738286" />
    </g>
    {steps.filter((t, i) => i % 2 === 0).map((t) => (
      <path key={t} d={smooth(mix(foot, t))} fill={ramp(footRamp, t)} />
    ))}
    <path d={`${smooth(mix(foot, 1))}L816 350 437 228Z`} fill="url(#wall)" />
    <Bevel id="rim" pairs={rim} from={rimBack} to={rimFront} axis={{ x1: 640, y1: 230, x2: 598, y2: 286 }} />
    <path d={smooth(mix(rim, 1), true)} fill="url(#face)" />
    <Bevel id="hole" pairs={hole} from={holeBack} to={holeFront} axis={{ x1: 600, y1: 262, x2: 578, y2: 300 }} />
    <g clipPath="url(#boreClip)">
      <path d="M480 190H640V320H480Z" fill="url(#bore)" />
      {steps.filter((t, i) => i % 2 === 0).map((t) => (
        <path key={t} d={smooth(mix(floor, t), true)} fill={ramp(floorRamp, t)} />
      ))}
      <path d={smooth(mix(floor, 1), true)} fill="#cbe2e8" stroke="#4b5759" strokeWidth=".7" />
    </g>
    <g fill="none" stroke="#414c4f" strokeWidth=".7">
      <path d={smooth(mix(foot, 0))} />
      <path d={smooth(mix(foot, 1))} />
      <path d={smooth(mix(rim, 1), true)} />
      <path d={smooth([...mix(rim, 0).slice(17), [437, 228]])} />
      <path d={smooth(mix(hole, 0), true)} />
      <path d={smooth([[496, 258], ...mix(hole, 1).slice(0, 9)])} />
      <path d="M600 339 676 256M600 339V353M604 339 605 353 601 420M647 360Q638 364 633 373L628 422 624 425M676 256Q681 255 684 261M677 259Q682 259 685 265M714 282 715 286" />
    </g>
    <g strokeLinecap="round">
      <path d="M262 542 269 538 282 543V556L275 562 262 557Z" fill="#c9cacb" stroke="#adafb1" strokeWidth=".7" />
      <path d="M262 542 275 547 282 543M275 547V562M269 538V552L282 556M269 552 262 557" fill="none" stroke="#b3b5b7" strokeWidth=".7" />
      <path d="M262 557 272 547" stroke="#a5c9a8" strokeWidth="1.500" />
      <path d="M261 558V541" stroke="#1c2fa8" strokeWidth="1.500" />
      <path d="M261 538 259 544H263Z" fill="#1c2fa8" />
      <path d="M262 559 279 565" stroke="#c92525" strokeWidth="1.500" />
      <path d="M284 566.500 277 566.500 279 562.500Z" fill="#c92525" />
      <circle cx="260.500" cy="558.500" r="2" fill="#d9d9d9" stroke="#777" strokeWidth=".6" />
    </g>
    <text x="259" y="538" fill="#5a6cf0">Z</text>
    <text x="271" y="547" fill="#a5c9a8">Y</text>
    <text x="284" y="571" fill="#e04646">X</text>
  </Scene>
);

const Defs = () => (
  <Svg $size={0} aria-hidden="true">
    <defs>
      <radialGradient id="gold" cx=".35" cy=".35" r=".7">
        <stop offset="0" stopColor="#fbf7a0" />
        <stop offset="1" stopColor="#bdb050" />
      </radialGradient>
      <linearGradient id="spectrum" x1="0" y1="0" x2="0" y2="1">
        {stops([[0, "#f22"], [0.25, "#f90"], [0.45, "#fe0"], [0.65, "#3c3"], [0.85, "#0cf"], [1, "#22d"]])}
      </linearGradient>
    </defs>
  </Svg>
);

const tabs = [
  ["홈", 25], ["어셈블리", 54], ["곡선", 34], ["곡면", 35], ["해석", 34], ["뷰", 25], ["렌더", 34], ["도구", 35], ["응용 프로그램", 76],
];

const TreeRow = ({ row, index, checked, onCheck }) => (
  <tr>
    <td>
      <Cell $child={row.child} $dim={row.dim} $bold={row.bold}>
        <Branch $first={index === 0} $last={index === 5 || index === rows.length - 1}>
          {row.toggle && <Toggle aria-label={row.text}>{row.toggle}</Toggle>}
        </Branch>
        {row.tick && <Icon name="tick" size={9} />}
        {row.child && <Check type="checkbox" id={`row${index}`} checked={checked} onChange={onCheck} />}
        {row.warn && <WarnMark><Icon name="warn" size={7} /></WarnMark>}
        <Icon name={row.icon} size={10} />
        {row.child ? <label htmlFor={`row${index}`}>{row.text}</label> : <span>{row.text}</span>}
      </Cell>
    </td>
    <td>{row.child && <Icon name="tick" size={9} />}</td>
    <td />
  </tr>
);

const App = () => {
  const [activeTab, setActiveTab] = useState("홈");
  const [activeSide, setActiveSide] = useState("partNav");
  const [hidden, setHidden] = useState({});

  return (
    <Page>
      <GlobalStyle />
      <Defs />
      <TitleBar>
        <QuickAccess>
          <Logo>NX</Logo>
          <Divider />
          <QuickButton aria-label="저장"><Icon name="save" /></QuickButton>
          <Divider />
          <QuickButton aria-label="실행 취소"><Icon name="undo" /><Caret /></QuickButton>
          <QuickButton aria-label="다시 실행"><Icon name="redo" /></QuickButton>
          <Divider />
          <QuickButton aria-label="잘라내기"><Icon name="cut" /></QuickButton>
          <QuickButton aria-label="복사"><Icon name="copy" /></QuickButton>
          <QuickButton aria-label="붙여넣기"><Icon name="paste" /></QuickButton>
          <Divider />
          <QuickButton aria-label="반복"><Icon name="star" /><Caret /></QuickButton>
          <Divider />
          <QuickButton aria-label="레이어"><Icon name="layers" /></QuickButton>
          <Divider />
          <QuickButton><Icon name="windows" />창<Caret /></QuickButton>
          <QuickButton aria-label="사용자 정의"><Caret /></QuickButton>
        </QuickAccess>
        <WindowTitle>NX 10 - 모델링 - [model1.prt]</WindowTitle>
      </TitleBar>

      <TabBar>
        <FileTab $w={53}>파일(F)</FileTab>
        {tabs.map(([name, w]) => (
          <Tab key={name} $w={w} $active={activeTab === name} onClick={() => setActiveTab(name)}>
            {name}
          </Tab>
        ))}
        <Search placeholder="명령 찾기" aria-label="명령 찾기" />
      </TabBar>

      <Ribbon>
        <RibbonGroup label="직접 스케치" pad={0}>
          <Big icon="sketch" lines={["스케치"]} w={40} />
          <Gallery>
            {["profile", "rect", "line", "arc", "circle", "plus"].map((name) => (
              <PlainButton key={name} aria-label={name}><Icon name={name} size={15} /></PlainButton>
            ))}
          </Gallery>
          <GalleryScroll>
            <Caret /><Caret /><Caret />
          </GalleryScroll>
        </RibbonGroup>
        <RibbonGroup label="특징형상" pad={5}>
          <Big icon="datum" lines={["데이텀", "평면"]} w={30} caret="inline" />
          <Big icon="extrudeRed" lines={["돌출"]} w={24} caret="below" />
          <Big icon="hole" lines={["구멍"]} w={24} />
          <Big icon="sphere" lines={["구"]} w={34} />
          <Small w={66} items={[["pattern", "패턴 특징형상"], ["unite", "결합", true], ["shell", "셸"]]} />
          <Big icon="blend" lines={["모서리", "블렌드"]} w={38} caret="inline" />
          <Small w={64} items={[["chamfer", "모따기"], ["trim", "바디 트리밍"], ["draft", "구배"]]} />
          <More icon="moreBody" />
        </RibbonGroup>
        <RibbonGroup label="동기식 모델링" pad={4}>
          <Big icon="moveFace" lines={["면 이동"]} w={35} />
          <Small w={56} items={[["offset", "옵셋 영역"], ["replace", "면 교체"], ["remove", "면 삭제"]]} />
          <More icon="moreSync" />
        </RibbonGroup>
        <RibbonGroup label="곡면" pad={2}>
          <Big icon="mesh" lines={["곡선", "통과 메시"]} w={45} />
          <Small w={65} items={[["mesh", "곡선 통과"], ["swept", "스웹"], ["fillSurf", "곡면 채우기"]]} />
          <More icon="moreSurf" />
        </RibbonGroup>
        <RibbonGroup label="어셈블리" pad={4}>
          <Big icon="context" lines={["어셈블리에서", "작업"]} w={56} disabled />
          <Big icon="add" lines={["추가"]} w={26} caret="below" />
          <Small w={84} items={[["constraint", "어셈블리 구속조건"], ["moveComp", "컴포넌트 이동"], ["patComp", "패턴 컴포넌트"]]} />
        </RibbonGroup>
      </Ribbon>

      <SelectionBar>
        <MenuButton>
          <Icon name="menu" />
          <span>메뉴(<u>M</u>)</span>
          <Caret />
        </MenuButton>
        <Divider />
        <Picker $w={91}>
          <select aria-label="선택 필터">
            <option>선택 필터 없음</option>
          </select>
          <Caret />
        </Picker>
        <Picker $w={96}>
          <select aria-label="선택 범위">
            <option>전체 어셈블리</option>
          </select>
          <Caret />
        </Picker>
        {tools.map((tool, i) => {
          if (tool === "^") return <Caret key={i} />;
          if (tool === "|") return <ToolSpacer key={i} />;
          const name = tool.replace("*", "");
          return (
            <ToolButton key={i} aria-label={name} $on={tool !== name}>
              <Icon name={name} size={11} />
            </ToolButton>
          );
        })}
      </SelectionBar>

      <Main>
        <SideStrip>
          {sideItems.map(([name, h, size]) => (
            <SideButton
              key={name}
              as={name ? "button" : "div"}
              $h={h}
              $active={activeSide === name}
              aria-label={name || undefined}
              onClick={() => name && setActiveSide(name)}
            >
              {name && <Icon name={name} size={size} />}
            </SideButton>
          ))}
        </SideStrip>
        <Panel>
          <PanelTitle>
            파트 탐색기
            <MaxBox aria-label="최대화" />
          </PanelTitle>
          <TreeBox>
            <Tree>
              <thead>
                <tr>
                  <th>이름<SortMark /></th>
                  <th>최신</th>
                  <th>코</th>
                </tr>
              </thead>
              <tbody>
                {rows.map((row, i) => (
                  <TreeRow
                    key={row.text}
                    row={row}
                    index={i}
                    checked={!hidden[i]}
                    onCheck={() => setHidden({ ...hidden, [i]: !hidden[i] })}
                  />
                ))}
                {emptyRows.map((i) => (
                  <tr key={i}><td /><td /><td /></tr>
                ))}
              </tbody>
            </Tree>
          </TreeBox>
          <ScrollRow>
            <ScrollEnd aria-label="왼쪽"><Chevron d="M11 2 5 8 11 14" size={8} color="#444" width={2} /></ScrollEnd>
            <ScrollThumb />
            <ScrollEnd $end aria-label="오른쪽"><Chevron d="M5 2 11 8 5 14" size={8} color="#444" width={2} /></ScrollEnd>
          </ScrollRow>
          <Splitter />
          {["종속성", "상세정보", "미리보기"].map((name, i) => (
            <Section key={name} $first={i === 0}>
              {name}
              <Chevron d="M2 3 8 12 14 3" size={9} color="#2d83ae" width={3} />
            </Section>
          ))}
        </Panel>
        <Viewport>
          <Model />
        </Viewport>
      </Main>
      <StatusBar />
    </Page>
  );
};

export default App;
